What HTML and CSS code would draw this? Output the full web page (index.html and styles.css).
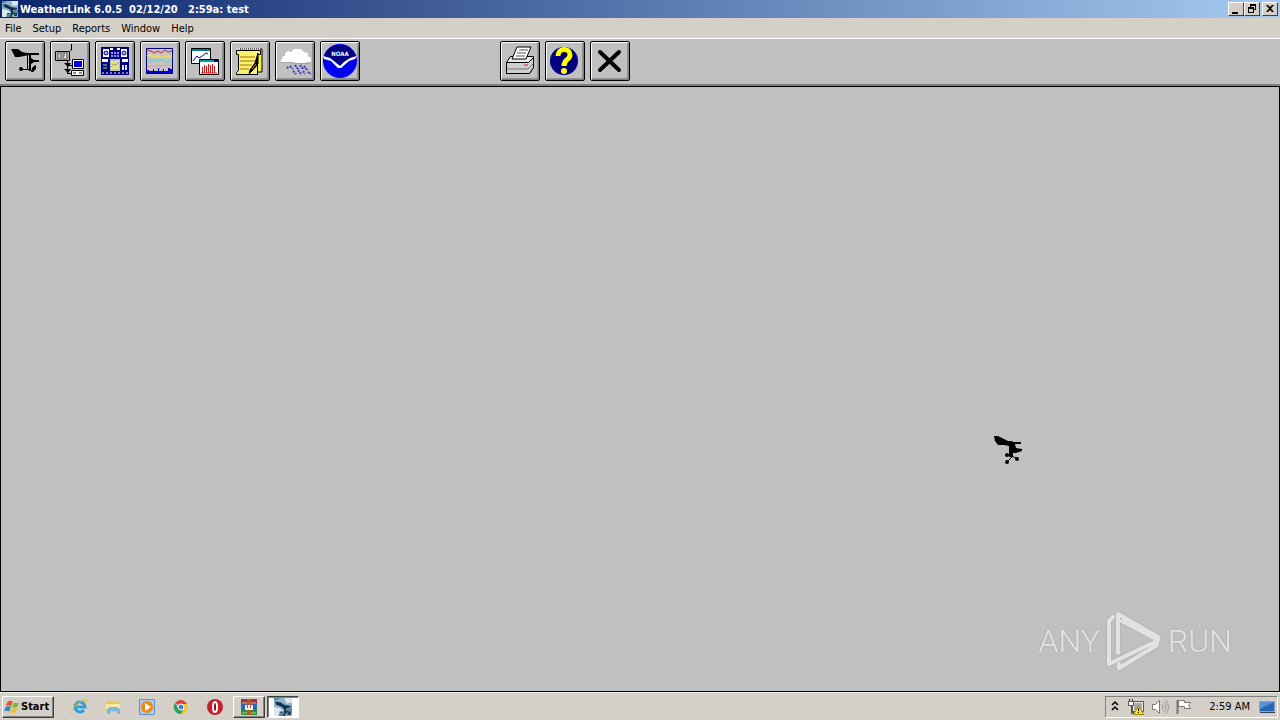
FILE: index.html
```html
<!DOCTYPE html>
<html lang="en">
<head>
  <meta charset="UTF-8">
  <meta name="viewport" content="width=device-width, initial-scale=1.0">
  <title>WeatherLink 6.0.5</title>
  <link rel="stylesheet" href="styles.css">
</head>
<body>
  <svg class="defs" aria-hidden="true">
    <symbol id="app" viewBox="0 0 16 16">
      <path fill="#8fb2c8" d="M0 0h16v16H0z"/>
      <path fill="#dbe8ee" d="M0 8l5 1 3 2-4 5H0zM9 0h7v4l-5 1z"/>
      <path fill="#5688a8" d="M0 0h5l-2 2H0zM11 7l5 2v4h-4zM5 13h5v3H4z"/>
      <path fill="#16324b" d="M1 3l5 1 3 2 6 1v1l-4 1v2l2 1-2 1v1H9v-4L7 8 2 6z"/>
      <path fill="#24415a" d="M12 12h3v3h-3zM5 12h3v1H5zM8 14h2v2H8z"/>
    </symbol>
    <symbol id="vane" viewBox="0 0 28 28">
      <path d="M0 0h4l10 5h4l1 1h8v2h-6l1 4 6 1v2l-6 2h-3v4h-4V10l-5-1H4L1 5z"/>
      <path d="M13 19l10 3M13 26l5-5" fill="none" stroke="#000"/>
      <circle cx="13" cy="19" r="2"/>
      <circle cx="23" cy="23" r="2"/>
      <circle cx="13" cy="26" r="2"/>
    </symbol>
  </svg>

  <header class="titlebar">
    <svg class="title-icon"><use href="#app"/></svg>
    <h1>WeatherLink 6.0.5&nbsp; 02/12/20&nbsp;&nbsp; 2:59a: test</h1>
    <div class="window-buttons">
      <button aria-label="Minimize"><svg viewBox="0 0 14 12"><path d="M3 9h6v2H3z"/></svg></button>
      <button aria-label="Restore"><svg viewBox="0 0 14 12"><path d="M5 1h6v6H9V6h1V3H6v1H5zM3 4h6v6H3zm1 2v3h4V6z" fill-rule="evenodd"/></svg></button>
      <button class="close" aria-label="Close"><svg viewBox="0 0 14 12"><path d="M3 2h2l2 2 2-2h2L8 5.500l3 3.500H9L7 7 5 9H3l3-3.500z"/></svg></button>
    </div>
  </header>

  <nav class="menubar">
    <button>File</button>
    <button>Setup</button>
    <button>Reports</button>
    <button>Window</button>
    <button>Help</button>
  </nav>

  <div class="toolbar">
    <button aria-label="Station">
      <svg viewBox="0 0 40 40">
        <path d="M6 8h7l4 3 5 1h12v2H24l-10 2h-4l-2-4z"/>
        <path d="M22 12h1v16h-1zM24 12h2v18h-2zM26 17l3 2h5v2h-5l-3 2z"/>
        <circle cx="16" cy="28" r="2"/>
        <path d="M17 28h8v1h-8zM29 25l2-1v4l-3 3h-2l1-4z"/>
      </svg>
    </button>
    <button aria-label="Download">
      <svg viewBox="0 0 40 40">
        <path d="M21.500 3v6H20" fill="none" stroke="#000"/>
        <path d="M5.500 10.500h14v9h-14z" fill="#b8b8b0" stroke="#000"/>
        <path d="M8 12h9v6H8z" fill="#ddd" stroke="#555"/>
        <path d="M10 14h5M10 16h4" stroke="#444"/>
        <path d="M17.500 20v13M17 24.500h5M17 32.500h5" fill="none" stroke="#000"/>
        <path d="M14 22h7l-3 4zM14 28h7l-3 4z"/>
        <path d="M22.500 18.500h11v9h-11zM21.500 29.500h12v5h-12z" fill="#fff" stroke="#000"/>
        <path d="M24 20h8v6h-8z" fill="#0000ee"/>
        <path d="M23 32h3M29 32h3" stroke="#0000b0"/>
      </svg>
    </button>
    <button aria-label="Bulletin">
      <svg viewBox="0 0 40 40">
        <path fill="#000080" d="M6 6h28v28H6z"/>
        <path fill="#fff" d="M8 8h6v8H8zM26 8h6v8h-6zM7 18h6v3H7zM27 18h6v3h-6zM15 7h3v2h-3zM22 7h3v2h-3z"/>
        <circle cx="11" cy="12" r="2" fill="#bbb" stroke="#000080"/>
        <circle cx="29" cy="12" r="2" fill="#bbb" stroke="#000080"/>
        <path d="M16 12h8M16 15h8" stroke="#9a8cff" stroke-width="2" stroke-dasharray="2 1"/>
        <path fill="#bfc5bb" d="M15 18h10v12H15z"/>
        <path fill="#e7df80" d="M16 20h8v8h-8z"/>
        <path d="M16 26l3-3 2 1 3-3" fill="none" stroke="#999"/>
        <path d="M8 24h4M8 27h4" stroke="#2e8a6a" stroke-width="2"/>
        <path d="M28 24v5M31 24v5" stroke="#cfe2ff" stroke-width="2"/>
        <path d="M7 32h26" stroke="#fff" stroke-dasharray="2 2"/>
      </svg>
    </button>
    <button aria-label="Strip Chart">
      <svg viewBox="0 0 40 40">
        <path fill="#c7c3c0" stroke="#000080" d="M6.500 7.500h26v25h-26z"/>
        <path d="M7 9l4 1 3 2 4-2 3 2 4-3 3 2 4-1" fill="none" stroke="#b52b3b"/>
        <path d="M7 15l3-1 4 2 5-1 4 2 4-2 5 1" fill="none" stroke="#e3dc70" stroke-width="2"/>
        <path d="M7 20l5-1 5 1 5-2 5 3 5-1" fill="none" stroke="#7cd3d0" stroke-width="2"/>
        <path d="M7 25l5 1 5-2 6 1 4-1 5 1" fill="none" stroke="#e3a0a0"/>
        <path fill="#0000d0" d="M7 32v-3h2v1h4v-2h1v2h4v-3h1v3h4v-2h1v2h4v-3h2v1h2v4z"/>
      </svg>
    </button>
    <button aria-label="Plot">
      <svg viewBox="0 0 40 40">
        <path fill="#fff" stroke="#000" d="M6.500 7.500h19v15h-19z"/>
        <path fill="#008080" d="M7 8h18v2H7z"/>
        <path d="M8 20l4-5 2 2 2-1 5-4 2 1" fill="none" stroke="#0000c0"/>
        <path fill="#fff" stroke="#000" d="M14.500 18.500h19v15h-19z"/>
        <path fill="#00a0a0" d="M15 19h18v2H15z"/>
        <path fill="#000080" d="M29 19h4v2h-4z"/>
        <path d="M17.500 26v6M19.500 24v8M21.500 25v7M23.500 23v9M25.500 24v8M27.500 23v9M29.500 25v7" stroke="#d01515"/>
        <path d="M16 32h16" stroke="#d01515"/>
      </svg>
    </button>
    <button aria-label="Browse">
      <svg viewBox="0 0 40 40">
        <path fill="#f2ef4e" stroke="#000" d="M10 8h22v23H10z"/>
        <path fill="#f8f36b" stroke="#000" d="M6.500 9.500h24v4h-3v20h-21v-2l2-2v-16h-2z"/>
        <path d="M7 8h24" stroke="#fff15c" stroke-width="2" stroke-dasharray="1 1"/>
        <path d="M10 16h15M10 20h15M10 24h12M10 28h9" stroke="#b36b14"/>
        <path d="M28 12l-3 10-5 7-1 4 3-3 6-7z" stroke="#000"/>
        <path d="M22 28l4-5" stroke="#b87b4a"/>
      </svg>
    </button>
    <button aria-label="Rain">
      <svg viewBox="0 0 40 40">
        <path fill="#fff" d="M7 18l-2 3h12l3 1h9l7-1v-4l-3-2v-3l-4-1-3-3h-7l-3 3-3-1-3 2v3H8z"/>
        <path fill="#a4a4a4" d="M5 21h12l3 1h9l7-1-3 2H19l-4-1H7z"/>
        <path d="M15 25l3 3M20 24l3 4M25 24l3 4M29 25l3 4M12 26l2 2M18 30l3 3M23 29l3 4M28 30l2 3M33 31l3 2" stroke="#3636c4" stroke-width="2" stroke-dasharray="2 1"/>
      </svg>
    </button>
    <button aria-label="NOAA Setup">
      <svg viewBox="0 0 40 40">
        <circle cx="20" cy="20" r="17" fill="#0000f0"/>
        <path fill="#000080" d="M4 15a17 17 0 0 1 32 0l-7 2-8 9-3-1-6-8z"/>
        <path fill="#fff" d="M3 15l7 2 5 4 5 4 4-4 6-4 7-2-2 3-6 2-8 7h-3l-7-7-7-2z"/>
        <text x="20" y="15" text-anchor="middle">NOAA</text>
      </svg>
    </button>

    <button class="print" aria-label="Print">
      <svg viewBox="0 0 40 40">
        <path fill="#e9e9e9" stroke="#000" d="M6.500 21.500l4-6h23v11l-4 6h-23z"/>
        <path fill="#fff" stroke="#000" d="M12 18l5-12h14l-5 12z"/>
        <path d="M19 9h9M17 12h9M16 15h9" stroke="#555"/>
        <path fill="#cfcfcf" stroke="#000" d="M6.500 21.500h22l5-5v10l-4 6h-23z"/>
        <path d="M7 28h21l5-5" fill="none" stroke="#777"/>
        <path d="M24 24h4" stroke="#e02020"/>
      </svg>
    </button>
    <button aria-label="Help">
      <svg viewBox="0 0 40 40">
        <circle cx="19" cy="20" r="14" fill="#000080"/>
        <path d="M14 15c0-7 11-8 11-1 0 5-5 4-5 10" fill="none" stroke="#000" stroke-width="6"/>
        <path d="M13 15c0-8 12-9 12-1 0 5-6 4-6 11" fill="none" stroke="#ff0" stroke-width="5"/>
        <circle cx="19" cy="30" r="3" fill="#ff0"/>
      </svg>
    </button>
    <button aria-label="Exit">
      <svg viewBox="0 0 40 40">
        <path d="M10 11l19 18M29 11L10 29" fill="none" stroke="#000" stroke-width="4" stroke-linecap="round"/>
      </svg>
    </button>
  </div>

  <main class="workspace">
    <svg class="pointer" aria-hidden="true"><use href="#vane"/></svg>
    <div class="watermark">
      <span>ANY</span>
      <svg viewBox="0 0 56 64" aria-hidden="true">
        <path d="M12 44V5L52 28V31L16 12M7 8L3 12v43L51 32v4L13 59v-4" stroke-linejoin="round" stroke-linecap="round"/>
      </svg>
      <span>RUN</span>
    </div>
  </main>

  <footer class="taskbar">
    <button class="start">
      <svg viewBox="0 0 18 16" aria-hidden="true">
        <path fill="#e9561f" d="M4 2c2-2 4-1 6 0L8 7C6 6 4 6 2 7z"/>
        <path fill="#7cb83b" d="M11 3c2 1 4 1 6 0l-2 5c-2 1-4 1-6 0z"/>
        <path fill="#3485c7" d="M2 8c2-1 4-1 6 0l-2 5c-2-1-4-1-6 0z"/>
        <path fill="#f3bd25" d="M9 9c2 1 4 1 6 0l-2 5c-2 1-4 1-6 0z"/>
      </svg>
      Start
    </button>
    <div class="tasks">
      <button aria-label="Internet Explorer">
        <svg viewBox="0 0 18 18">
          <path d="M14 12a5 5 0 1 1 1-3H5" fill="none" stroke="#329fd7" stroke-width="3"/>
          <path d="M2 16c-3-3 8-15 14-14 1 1 0 3-1 4" fill="none" stroke="#e9bb35"/>
        </svg>
      </button>
      <button aria-label="Explorer">
        <svg viewBox="0 0 18 18">
          <path fill="#e8c75c" d="M2 3h5l1 1h7v10H2z"/>
          <path fill="#f8e9a0" d="M2 6h14v6H2z"/>
          <path fill="#79b9df" d="M3 11l3-2h7l3 2v5h-3v-3H6v3H3z"/>
        </svg>
      </button>
      <button aria-label="Media Player">
        <svg viewBox="0 0 18 18">
          <path fill="#a9ccec" stroke="#5d93c5" d="M1.500 1.500h15v15h-15z"/>
          <circle cx="9" cy="9" r="6" fill="#f38613"/>
          <path fill="#fff" d="M7 5l6 4-6 4z"/>
        </svg>
      </button>
      <button aria-label="Chrome">
        <svg viewBox="0 0 18 18">
          <path fill="#dc4437" d="M9 9L3 5a7 7 0 0 1 12 1z"/>
          <path fill="#f4c226" d="M9 6h6a7 7 0 0 1-6 10l3-6z"/>
          <path fill="#2ca15a" d="M3 5l4 6 4 1-2 4A7 7 0 0 1 3 5z"/>
          <circle cx="9" cy="9" r="3" fill="#3c7fe5" stroke="#fff"/>
        </svg>
      </button>
      <button aria-label="Opera">
        <svg viewBox="0 0 18 18">
          <circle cx="9" cy="9" r="8" fill="#c4202a"/>
          <ellipse cx="9" cy="9" rx="2" ry="5" fill="#831018" stroke="#fff" stroke-width="2"/>
        </svg>
      </button>
      <button class="open" aria-label="WinRAR">
        <svg viewBox="0 0 18 18">
          <path fill="#a52b50" d="M1 1h16v5H1z"/>
          <path fill="#3263b5" d="M1 6h16v6H1z"/>
          <path fill="#2b8c43" d="M1 12h16v5H1z"/>
          <path fill="#b85a22" d="M7 1h4v16H7z"/>
          <path fill="#eee" d="M5 7h2v3h1V7h2v3h1V7h2v5H5z"/>
          <path d="M2 5h5M11 5h5M2 15h5M11 15h5" stroke="#d9c66e"/>
        </svg>
      </button>
      <button class="open active" aria-label="WeatherLink"><svg><use href="#app"/></svg></button>
    </div>
    <div class="tray">
      <button aria-label="Show hidden icons">
        <svg viewBox="0 0 18 18"><path d="M6 7l3-3 3 3M6 12l3-3 3 3" fill="none" stroke="#000" stroke-width="1.500"/></svg>
      </button>
      <button class="network" aria-label="Network">
        <svg viewBox="0 0 18 18">
          <path fill="#eee" stroke="#555" d="M5.500 3.500h11v10h-11z"/>
          <path fill="#aaa" d="M7 5h8v7H7z"/>
          <path fill="#fff" stroke="#555" d="M1.500 3.500h5v4h-2v8h4v-1h-3v-7h-4z"/>
          <path d="M2.500 1v2M5.500 1v2" stroke="#333"/>
          <path fill="#ffdc24" stroke="#a68400" d="M11.500 7.500l5 9h-10z"/>
          <path d="M11.500 10v3M11.500 14v1" stroke="#000"/>
        </svg>
      </button>
      <button aria-label="Volume">
        <svg viewBox="0 0 18 18">
          <path d="M1.500 6.500h3l4-4v13l-4-4h-3z" fill="#fff" stroke="#777"/>
          <path d="M11 6q2 3 0 6M13 4q4 5 0 10M15 2q5 7 0 14" fill="none" stroke="#999"/>
        </svg>
      </button>
      <button aria-label="Action Center">
        <svg viewBox="0 0 18 18">
          <path d="M2.500 2v14" stroke="#777" stroke-width="2"/>
          <path fill="#fff" stroke="#777" d="M3.500 2.500h6v2h6l-2 3 2 3h-6v-2h-6z"/>
        </svg>
      </button>
      <time>2:59 AM</time>
      <button class="desktop" aria-label="Show desktop">
        <svg viewBox="0 0 18 18">
          <path fill="#2865b2" stroke="#85a7ce" d="M1.500 3.500h15v10h-15z"/>
          <path fill="#5492d5" d="M2 4h14L2 11z"/>
          <path fill="#345" d="M2 14h15v1H2z"/>
        </svg>
      </button>
    </div>
  </footer>
</body>
</html>
```
FILE: styles.css
```css
* {
  box-sizing: border-box;
}
body {
  margin: 0;
  min-height: 100vh;
  display: flex;
  flex-direction: column;
  background: #d4d0c8;
  color: #000;
  font: 11px/14px Tahoma, "DejaVu Sans Condensed", "DejaVu Sans", sans-serif;
}
button {
  margin: 0;
  padding: 0;
  border: 0;
  background: none;
  color: inherit;
  font: inherit;
}
svg {
  display: block;
  flex: none;
}
.defs {
  position: absolute;
  width: 0;
  height: 0;
}

/* title bar */
.titlebar {
  display: flex;
  align-items: center;
  height: 18px;
  padding: 0 2px;
  background: linear-gradient(to right, #0a246a, #a6caf0);
  color: #fff;
}
.title-icon {
  width: 16px;
  height: 16px;
  margin-right: 2px;
}
.titlebar h1 {
  margin: 0;
  padding-top: 1px;
  font-size: 11px;
  line-height: 15px;
  white-space: nowrap;
}
.window-buttons {
  display: flex;
  margin-left: auto;
}
.window-buttons button {
  width: 16px;
  height: 14px;
  border: 1px solid;
  border-color: #fff #404040 #404040 #fff;
  background: #d4d0c8;
}
.window-buttons .close {
  margin-left: 2px;
}
.window-buttons svg {
  width: 14px;
  height: 12px;
}

/* menu */
.menubar {
  display: flex;
  gap: 11px;
  height: 21px;
  padding: 1px 5px 0;
  border-bottom: 1px solid #fff;
}

/* toolbar */
.toolbar {
  display: flex;
  gap: 5px;
  padding: 2px 5px 3px;
  background: #c0c0c0;
  border-bottom: 2px solid #808080;
}
.toolbar button {
  width: 40px;
  height: 40px;
  border: 1px solid #000;
  border-radius: 2px;
  background: #c0c0c0;
  box-shadow: inset 1px 1px #fff, inset -1px -1px #808080, inset -2px -2px #909090;
}
.toolbar svg {
  width: 40px;
  height: 40px;
  margin: -1px;
}
.toolbar text {
  fill: #fff;
  font: bold 6px "DejaVu Sans Condensed", sans-serif;
}
.toolbar .print {
  margin-left: 135px;
}

/* client area */
.workspace {
  position: relative;
  flex: 1;
  border: 1px solid #000;
  background: #c0c0c0;
}
.pointer {
  position: absolute;
  right: 257px;
  bottom: 227px;
  width: 28px;
  height: 28px;
}
.watermark {
  position: absolute;
  right: 47px;
  bottom: 18px;
  display: flex;
  align-items: center;
  gap: 6px;
  color: #e2e2e2;
  font: 300 32px/64px Roboto, "Open Sans", sans-serif;
  filter: drop-shadow(0 0 1px #aaa);
}
.watermark svg {
  width: 56px;
  height: 64px;
  fill: none;
  stroke: #e2e2e2;
  stroke-width: 4;
}

/* taskbar */
.taskbar {
  display: flex;
  align-items: center;
  height: 28px;
  padding: 2px 2px 1px;
  border-top: 1px solid #f4f2ee;
}
.start {
  display: flex;
  align-items: center;
  gap: 1px;
  width: 52px;
  height: 22px;
  padding-left: 1px;
  border: 1px solid;
  border-color: #fff #404040 #404040 #fff;
  box-shadow: inset -1px -1px #808080;
  font-weight: bold;
}
.start svg {
  width: 16px;
  height: 16px;
}
.tasks {
  display: flex;
  margin-left: 9px;
  gap: 2px;
}
.tasks button {
  display: flex;
  align-items: center;
  justify-content: center;
  width: 32px;
  height: 22px;
}
.tasks svg {
  width: 18px;
  height: 18px;
}
.tasks .open {
  border: 1px solid;
  border-color: #fff #404040 #404040 #fff;
  box-shadow: inset -1px -1px #808080;
}
.tasks .active {
  border-color: #404040 #fff #fff #404040;
  background: #fff;
  box-shadow: inset 1px 1px #808080;
}
.tray {
  display: flex;
  align-items: center;
  height: 22px;
  margin-left: auto;
  border: 1px solid;
  border-color: #808080 #fff #fff #808080;
}
.tray svg {
  width: 18px;
  height: 18px;
}
.tray .network {
  margin-left: 3px;
}
.tray .network,
.tray .network ~ button {
  margin-right: 6px;
}
.tray time {
  margin: 0 8px 0 10px;
}
.tray .desktop.desktop {
  margin-right: 1px;
}
```
